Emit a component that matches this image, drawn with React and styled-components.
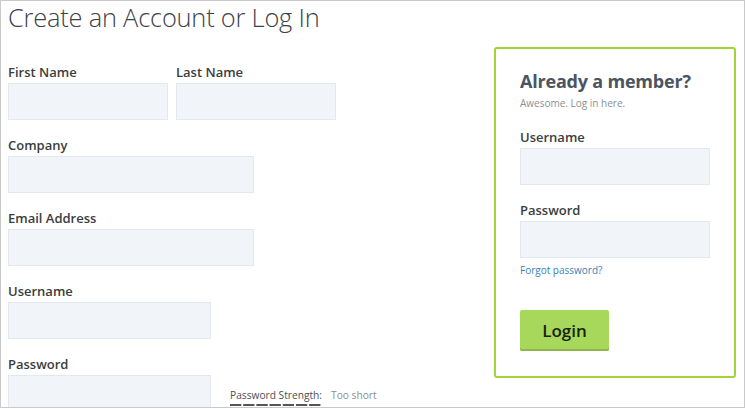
import styled, { createGlobalStyle } from "styled-components";

const GlobalStyle = createGlobalStyle`
  html, body {
    margin: 0;
    padding: 0;
    background: #ffffff;
  }
  body {
    font-family: "Open Sans", "Liberation Sans", sans-serif;
  }
`;

const Page = styled.div`
  box-sizing: border-box;
  width: 745px;
  height: 408px;
  border: 1px solid #c9c9c9;
  overflow: hidden;
  padding: 0 0 0 7px;
`;

const Title = styled.h1`
  margin: 0;
  font-size: 25.4px;
  line-height: 32px;
  font-weight: 300;
  color: #3b4249;
  letter-spacing: -0.2px;
`;

const Body = styled.div`
  display: flex;
  justify-content: space-between;
  align-items: flex-start;
`;

const Form = styled.form`
  padding-top: 30px;
  margin: 0;
`;

const Row = styled.div`
  display: flex;
  align-items: flex-end;
  gap: ${(p) => p.$gap || 0}px;
`;

const Field = styled.div`
  margin-bottom: 16px;
`;

const Label = styled.label`
  display: block;
  font-size: 13px;
  line-height: 18px;
  font-weight: 600;
  color: #3a3d40;
  margin-bottom: 2px;
`;

const Input = styled.input`
  display: block;
  box-sizing: border-box;
  width: ${(p) => p.$w}px;
  height: 37px;
  margin: 0;
  border: 1px solid #e2e8ee;
  background: #f1f4f8;
  outline: none;
  font: inherit;
`;

const Strength = styled.div`
  margin: 0 0 0 19px;
  padding-bottom: 22px;
  display: flex;
  align-items: flex-start;
  gap: 9px;
  font-size: 10.2px;
  line-height: 14px;
`;

const StrengthLabel = styled.span`
  color: #4a4f55;
  padding-bottom: 4px;
  background-image: linear-gradient(to right, #555 11px, transparent 11px);
  background-size: 13.2px 2px;
  background-repeat: repeat-x;
  background-position: 0 100%;
`;

const StrengthValue = styled.span`
  color: #8a8e92;
`;

const Panel = styled.aside`
  box-sizing: border-box;
  width: 242px;
  margin: 14px 8px 0 0;
  border: 2px solid #a2d533;
  border-radius: 3px;
  padding: 20px 24px 25px 24px;
`;

const PanelTitle = styled.h2`
  margin: 0;
  font-size: 18px;
  line-height: 24px;
  font-weight: 700;
  color: #4a5561;
  letter-spacing: -0.2px;
`;

const PanelSub = styled.p`
  margin: 3px 0 18px;
  font-size: 10px;
  line-height: 14px;
  color: #8a8f94;
`;

const Forgot = styled.a`
  display: block;
  margin-top: -11px;
  font-size: 10px;
  line-height: 14px;
  color: #3b7fb6;
  text-decoration: none;
`;

const LoginButton = styled.button`
  display: block;
  margin-top: 33px;
  width: 89px;
  height: 41px;
  border: none;
  border-radius: 2px;
  background: #a7d75b;
  box-shadow: inset 0 -2px 0 #8fb64d;
  font-family: "Open Sans", "Liberation Sans", sans-serif;
  font-size: 17px;
  font-weight: 600;
  color: #17240c;
  cursor: pointer;
`;

export default function App() {
  return (
    <>
      <GlobalStyle />
      <Page>
        <Title>Create an Account or Log In</Title>
        <Body>
          <Form>
            <Row $gap={8}>
              <Field>
                <Label>First Name</Label>
                <Input $w={160} />
              </Field>
              <Field>
                <Label>Last Name</Label>
                <Input $w={160} />
              </Field>
            </Row>
            <Field>
              <Label>Company</Label>
              <Input $w={246} />
            </Field>
            <Field>
              <Label>Email Address</Label>
              <Input $w={246} />
            </Field>
            <Field>
              <Label>Username</Label>
              <Input $w={203} />
            </Field>
            <Row>
              <Field>
                <Label>Password</Label>
                <Input $w={203} type="password" />
              </Field>
              <Strength>
                <StrengthLabel>Password Strength:</StrengthLabel>
                <StrengthValue>Too short</StrengthValue>
              </Strength>
            </Row>
          </Form>
          <Panel>
            <PanelTitle>Already a member?</PanelTitle>
            <PanelSub>Awesome. Log in here.</PanelSub>
            <Field>
              <Label>Username</Label>
              <Input $w={190} />
            </Field>
            <Field>
              <Label>Password</Label>
              <Input $w={190} type="password" />
            </Field>
            <Forgot href="#">Forgot password?</Forgot>
            <LoginButton type="button">Login</LoginButton>
          </Panel>
        </Body>
      </Page>
    </>
  );
}
